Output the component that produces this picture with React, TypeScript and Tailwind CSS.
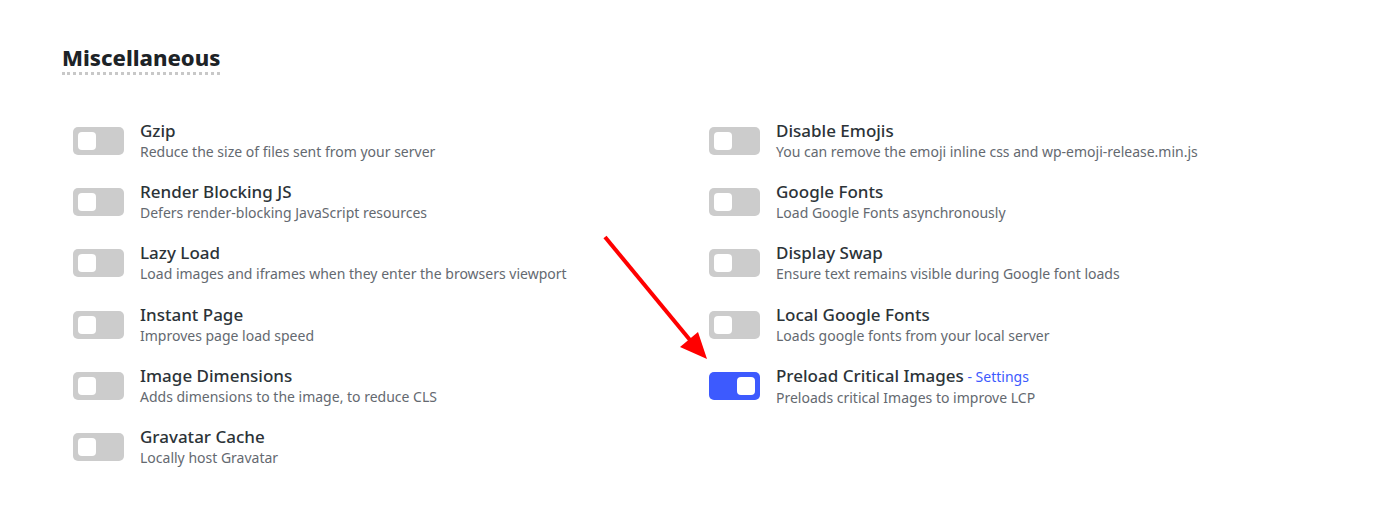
import React from 'react';

type Item = { title: string; desc: string; on?: boolean; link?: string };

const left: Item[] = [
  { title: 'Gzip', desc: 'Reduce the size of files sent from your server' },
  { title: 'Render Blocking JS', desc: 'Defers render-blocking JavaScript resources' },
  { title: 'Lazy Load', desc: 'Load images and iframes when they enter the browsers viewport' },
  { title: 'Instant Page', desc: 'Improves page load speed' },
  { title: 'Image Dimensions', desc: 'Adds dimensions to the image, to reduce CLS' },
  { title: 'Gravatar Cache', desc: 'Locally host Gravatar' },
];

const right: Item[] = [
  { title: 'Disable Emojis', desc: 'You can remove the emoji inline css and wp-emoji-release.min.js' },
  { title: 'Google Fonts', desc: 'Load Google Fonts asynchronously' },
  { title: 'Display Swap', desc: 'Ensure text remains visible during Google font loads' },
  { title: 'Local Google Fonts', desc: 'Loads google fonts from your local server' },
  { title: 'Preload Critical Images', desc: 'Preloads critical Images to improve LCP', on: true, link: 'Settings' },
];

function Toggle({ on }: { on?: boolean }) {
  return (
    <div
      className={`w-[51px] h-[28px] rounded-[5px] flex items-center px-[5px] shrink-0 ${
        on ? 'bg-[#3d5afe] justify-end' : 'bg-[#cccccc] justify-start'
      }`}
    >
      <div className="w-[18px] h-[18px] rounded-[4px] bg-white" />
    </div>
  );
}

function Row({ item }: { item: Item }) {
  return (
    <div className="flex items-center h-[45px] gap-[16px]">
      <Toggle on={item.on} />
      <div className="flex flex-col">
        <div className="text-[17px] leading-[22px] text-[#2c3338] font-medium">
          {item.title}
          {item.link && <span className="text-[14px] text-[#3d5afe] font-normal"> - {item.link}</span>}
        </div>
        <div className="text-[14px] leading-[20px] text-[#646970]">{item.desc}</div>
      </div>
    </div>
  );
}

export default function App() {
  return (
    <div className="relative w-[1400px] h-[509px] bg-white font-['Noto_Sans',sans-serif] overflow-hidden">
      <div className="pl-[62px] pt-[43px]">
        <h2 className="inline-block text-[22px] leading-[28px] font-extrabold text-[#1d2327] border-b-[3px] border-dotted border-[#c8c8c8] pb-[1px]">
          Miscellaneous
        </h2>
      </div>
      <div className="grid grid-cols-2 pl-[73px] pt-[43px] w-[1345px]">
        <div className="flex flex-col gap-[16.4px]">
          {left.map((it) => (
            <Row key={it.title} item={it} />
          ))}
        </div>
        <div className="flex flex-col gap-[16.4px]">
          {right.map((it) => (
            <Row key={it.title} item={it} />
          ))}
        </div>
      </div>
      <svg className="absolute left-0 top-0" width="1400" height="509" viewBox="0 0 1400 509">
        <line x1="605" y1="237" x2="690" y2="340" stroke="#ff0000" strokeWidth="4" />
        <polygon points="707,359 680,347 698,332" fill="#ff0000" />
      </svg>
    </div>
  );
}
